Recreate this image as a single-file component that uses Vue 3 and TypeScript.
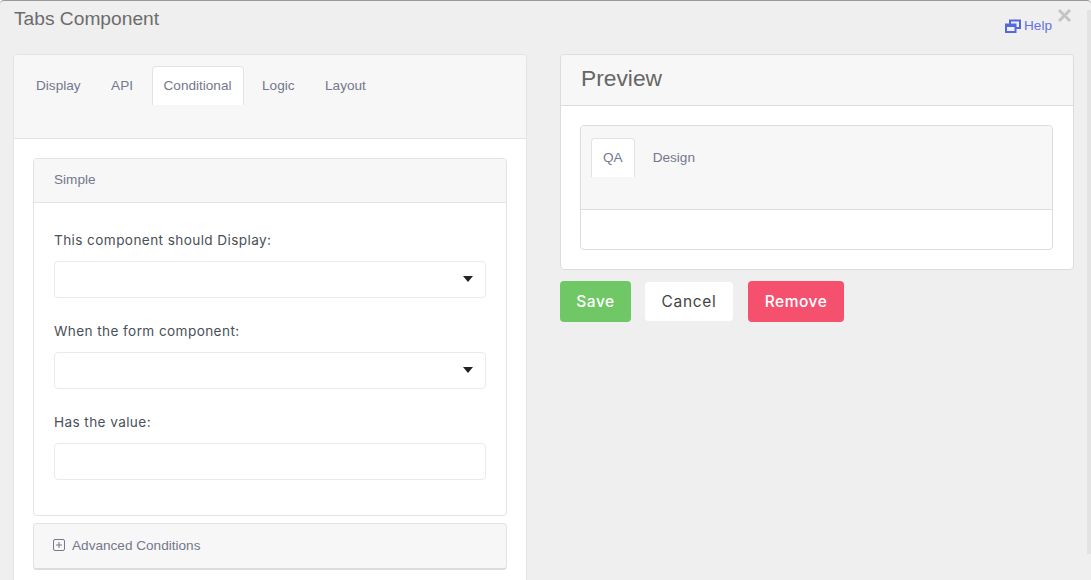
<script setup lang="ts">
const mainTabs: string[] = ['Display', 'API', 'Conditional', 'Logic', 'Layout']
const previewTabs: string[] = ['QA', 'Design']
const fields: { label: string; select: boolean }[] = [
  { label: 'This component should Display:', select: true },
  { label: 'When the form component:', select: true },
  { label: 'Has the value:', select: false },
]
</script>

<template>
  <div class="modal">
    <header class="top">
      <h1 class="title">Tabs Component</h1>
      <a class="help">
        <svg class="help-icon" width="16" height="14" viewBox="0 0 16 14" fill="none" stroke="#5468e0">
          <path d="M5 5.5V1.5H15V9H10.5" stroke-width="2" />
          <rect x="1" y="5.5" width="9.5" height="7.5" stroke-width="2" />
          <path d="M1 6.5H10.5" stroke-width="3" />
        </svg>
        <span>Help</span>
      </a>
      <svg class="close" width="15" height="15" viewBox="0 0 15 15" stroke="#c4c4c4" stroke-width="3">
        <path d="M2 2L13 13M13 2L2 13" />
      </svg>
    </header>

    <div class="columns">
      <section class="card settings">
        <div class="tabs main-tabs">
          <span v-for="t in mainTabs" :key="t" class="tab" :class="{ active: t === 'Conditional' }">{{ t }}</span>
        </div>
        <div class="settings-body">
          <div class="panel simple">
            <div class="panel-head">Simple</div>
            <div class="panel-body">
              <div v-for="f in fields" :key="f.label" class="field">
                <label class="label">{{ f.label }}</label>
                <div class="control">
                  <span v-if="f.select" class="caret"></span>
                </div>
              </div>
            </div>
          </div>
          <div class="panel advanced">
            <svg width="12" height="12" viewBox="0 0 12 12" fill="none" stroke="#74788d">
              <rect x="0.5" y="0.5" width="11" height="11" rx="1.5" />
              <path d="M3 6H9M6 3V9" />
            </svg>
            <span>Advanced Conditions</span>
          </div>
        </div>
      </section>

      <div class="side">
        <section class="card preview">
          <h2 class="preview-head">Preview</h2>
          <div class="preview-body">
            <div class="preview-inner">
              <div class="tabs preview-tabs">
                <span v-for="t in previewTabs" :key="t" class="tab" :class="{ active: t === 'QA' }">{{ t }}</span>
              </div>
              <div class="preview-content"></div>
            </div>
          </div>
        </section>
        <div class="actions">
          <button class="btn save">Save</button>
          <button class="btn cancel">Cancel</button>
          <button class="btn remove">Remove</button>
        </div>
      </div>
    </div>
    <div class="scroll-track"></div>
  </div>
</template>

<style>
html, body { margin: 0; background: #fff; overflow: hidden; }
</style>

<style scoped>
.modal {
  position: relative;
  box-sizing: border-box;
  height: 580px;
  overflow: hidden;
  background: #efefef;
  border-top: 1px solid #999;
  border-radius: 4px 4px 0 0;
  padding: 0 17px 0 13px;
  font-family: "Liberation Sans", Arial, sans-serif;
}
.top { display: flex; align-items: flex-start; height: 53px; }
.title {
  margin: 8px 0 0 1px;
  flex: 1;
  font-size: 19.2px;
  line-height: 20px;
  font-weight: 400;
  color: #6c6c6c;
}
.help {
  display: flex;
  align-items: center;
  gap: 3px;
  margin-top: 17px;
  font-size: 13.6px;
  line-height: 16px;
  color: #6373e2;
}
.close { margin: 7px 2px 0 5px; }
.columns { display: grid; grid-template-columns: 514px 514px; gap: 33px; }
.card {
  box-sizing: border-box;
  background: #fff;
  border: 1px solid #dcdcdc;
  border-radius: 4px;
}
.settings { height: 540px; border-color: #e2e3e8; }
.tabs {
  display: flex;
  background: #f7f7f7;
  border-bottom: 1px solid #e2e3e8;
  box-sizing: border-box;
  font-size: 13.6px;
  color: #74788d;
}
.main-tabs { height: 84px; padding: 11px 0 0 10px; border-radius: 4px 4px 0 0; }
.tab { box-sizing: border-box; height: 39px; padding: 0 11px; line-height: 37px; border: 1px solid transparent; border-bottom: 0; }
.main-tabs .tab { margin-right: 6.5px; }
.tab.active { background: #fff; border-color: #e2e3e8; border-radius: 4px 4px 0 0; }
.settings-body { padding: 19px 19px 0; display: flex; flex-direction: column; gap: 7px; }
.panel { box-sizing: border-box; border: 1px solid #e2e3e8; border-radius: 4px; }
.simple { height: 358px; }
.panel-head {
  height: 44px;
  box-sizing: border-box;
  padding-left: 20px;
  line-height: 41px;
  font-size: 13.6px;
  color: #74788d;
  background: #f7f7f7;
  border-bottom: 1px solid #e2e3e8;
  border-radius: 4px 4px 0 0;
}
.panel-body { padding: 26px 20px 0; }
.field { height: 91px; }
.label {
  display: block;
  height: 32px;
  font-family: "Inter", sans-serif;
  font-size: 13.6px;
  font-weight: 400;
  letter-spacing: 0.4px;
  line-height: 22px;
  color: #495057;
}
.control {
  position: relative;
  box-sizing: border-box;
  height: 37px;
  border: 1px solid #eaeaee;
  border-radius: 4px;
  background: #fff;
}
.caret {
  position: absolute;
  right: 12px;
  top: 14px;
  border: 5.5px solid transparent;
  border-top: 6px solid #222;
  border-bottom: 0;
}
.advanced {
  height: 47px;
  display: flex;
  align-items: center;
  gap: 7px;
  padding: 0 0 2px 19px;
  font-size: 13.6px;
  color: #74788d;
  background: #f7f7f7;
  border-bottom: 2px solid #dcdcdc;
}
.preview { height: 216px; }
.preview-head {
  margin: 0;
  box-sizing: border-box;
  height: 51px;
  padding-left: 20px;
  font-size: 22.8px;
  font-weight: 400;
  line-height: 47px;
  color: #666;
  background: #f7f7f7;
  border-bottom: 1px solid #dcdcdc;
  border-radius: 4px 4px 0 0;
}
.preview-body { padding: 19px 20px 0 19px; }
.preview-inner { box-sizing: border-box; height: 125px; border: 1px solid #dcdcdc; border-radius: 4px; }
.preview-tabs { height: 84px; padding: 12px 0 0 10px; border-bottom-color: #dcdcdc; border-radius: 4px 4px 0 0; }
.preview-tabs .tab { margin-right: 6px; }
.actions { display: flex; gap: 14px; align-items: center; margin-top: 11px; }
.btn {
  box-sizing: border-box;
  border: 0;
  border-radius: 4px;
  padding: 0 0 1px;
  font-family: "Inter", sans-serif;
  font-size: 15.5px;
  font-weight: 500;
  letter-spacing: 0.5px;
  cursor: pointer;
}
.save { width: 71px; height: 41px; background: #6fc765; color: #fff; }
.cancel { width: 88px; height: 39px; background: #fff; color: #444; font-weight: 400; letter-spacing: 0.7px; }
.remove { width: 96px; height: 41px; margin-left: 1px; background: #f5516f; color: #fff; }
.scroll-track {
  position: absolute;
  top: 9px;
  right: 0;
  width: 4px;
  height: 544px;
  background: #e3e3e3;
}
</style>
